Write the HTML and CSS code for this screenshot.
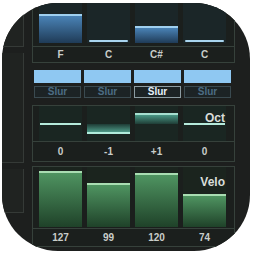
FILE: index.html
```html
<!DOCTYPE html>
<html lang="en">
<head>
    <meta charset="UTF-8">
    <meta name="viewport" content="width=device-width, initial-scale=1.0">
    <title>Sequencer</title>
    <link rel="stylesheet" href="styles.css">
</head>
<body>
    <div class="app">
        <div class="side">
            <div class="side-box"></div>
            <div class="side-box tall"></div>
            <div class="side-box"></div>
        </div>
        <div class="main">
            <!-- Note -->
            <div class="section note">
                <div class="cols">
                    <div class="col"><div class="bar blue" style="height:29px"></div></div>
                    <div class="col"><div class="bar line-blue"></div></div>
                    <div class="col"><div class="bar blue" style="height:17px"></div></div>
                    <div class="col"><div class="bar line-blue"></div></div>
                </div>
                <div class="labels">
                    <span>F</span><span>C</span><span>C#</span><span>C</span>
                </div>
            </div>

            <!-- Slur -->
            <div class="slur-row">
                <div class="slur"><div class="slur-fill"></div><div class="slur-btn">Slur</div></div>
                <div class="slur"><div class="slur-fill"></div><div class="slur-btn">Slur</div></div>
                <div class="slur"><div class="slur-fill"></div><div class="slur-btn on">Slur</div></div>
                <div class="slur"><div class="slur-fill"></div><div class="slur-btn">Slur</div></div>
            </div>

            <!-- Octave -->
            <div class="section oct">
                <div class="cols">
                    <div class="col"><div class="bar line-teal" style="margin-top:17px"></div></div>
                    <div class="col"><div class="bar teal-down" style="margin-top:18px;height:10px"></div></div>
                    <div class="col"><div class="bar teal-up" style="margin-top:7px;height:11px"></div></div>
                    <div class="col"><div class="bar line-teal" style="margin-top:17px"></div></div>
                    <span class="tag oct-tag">Oct</span>
                </div>
                <div class="labels">
                    <span>0</span><span>-1</span><span>+1</span><span>0</span>
                </div>
            </div>

            <!-- Velocity -->
            <div class="section velo">
                <div class="cols">
                    <div class="col"><div class="bar green" style="height:56px"></div></div>
                    <div class="col"><div class="bar green" style="height:44px"></div></div>
                    <div class="col"><div class="bar green" style="height:54px"></div></div>
                    <div class="col"><div class="bar green" style="height:33px"></div></div>
                    <span class="tag velo-tag">Velo</span>
                </div>
                <div class="labels">
                    <span>127</span><span>99</span><span>120</span><span>74</span>
                </div>
            </div>
        </div>
    </div>
</body>
</html>
```

FILE: styles.css
```css
* {
    box-sizing: border-box;
    margin: 0;
    padding: 0;
}

body {
    background: #ffffff;
    font-family: 'Liberation Sans', Arial, sans-serif;
}

.app {
    width: 248px;
    height: 248px;
    margin: 3px 0 0 2px;
    border-radius: 56px;
    overflow: hidden;
    background: #1d1f1e;
    display: flex;
}

/* Left strip (neighbour panel) */
.side {
    width: 30px;
    display: flex;
    flex-direction: column;
    gap: 6px;
    padding: 0 8px 0 0;
}

.side-box {
    height: 44px;
    border-right: 1px solid #353a37;
    border-bottom: 1px solid #353a37;
    background: #202321;
}

.side-box.tall {
    height: 110px;
}

.main {
    width: 203px;
    display: flex;
    flex-direction: column;
}

.section {
    border: 1px solid #36413b;
    background: #1b1f1d;
}

.cols {
    display: flex;
    gap: 5px;
    padding: 0 8px 0 6px;
    border-bottom: 1px solid #36413b;
    position: relative;
}

.col {
    width: 43px;
    display: flex;
    flex-direction: column;
    justify-content: flex-end;
}

.labels {
    display: flex;
    gap: 5px;
    padding: 0 8px 0 6px;
}

.labels span {
    width: 43px;
    text-align: center;
    color: #c9cdca;
    font-size: 10px;
    font-weight: bold;
}

/* Note section */
.note {
    border-top: none;
    height: 60px;
}

.note .cols {
    height: 44px;
    padding-bottom: 3px;
}

.note .col {
    background: #1b2628;
}

.note .labels {
    height: 14px;
    line-height: 15px;
}

.bar.blue {
    background: linear-gradient(#4a83b6, #1f3b57);
    border-top: 2px solid #9fd0f0;
}

.bar.line-blue {
    height: 2px;
    margin: 0 2px 1px;
    border-radius: 1px;
    background: #a9d5ef;
}

/* Slur row */
.slur-row {
    display: flex;
    gap: 3px;
    padding-left: 2px;
    margin-top: 7px;
}

.slur {
    width: 47px;
    display: flex;
    flex-direction: column;
    gap: 3px;
}

.slur-fill {
    height: 13px;
    background: #8fc8f2;
}

.slur-btn {
    height: 12px;
    border: 1px solid #3a4a50;
    background: #1c2325;
    color: #4c6d84;
    font-size: 10px;
    font-weight: bold;
    text-align: center;
    line-height: 10px;
}

.slur-btn.on {
    border-color: #8c9ca2;
    color: #e6f2fa;
}

/* Octave section */
.oct {
    margin-top: 7px;
}

.oct .cols {
    height: 36px;
}

.oct .col {
    justify-content: flex-start;
    background: #1a2622;
}

.oct .labels {
    height: 19px;
    line-height: 19px;
}

.bar.line-teal {
    height: 2px;
    margin-left: 1px;
    margin-right: 1px;
    background: #b5eadb;
}

.bar.teal-down {
    background: linear-gradient(#1e3b35, #4e9a88);
    border-bottom: 2px solid #b0ecdc;
}

.bar.teal-up {
    background: linear-gradient(#4a9886, #1f3d36);
    border-top: 2px solid #a6dfd0;
}

.tag {
    position: absolute;
    color: #d9ddd9;
    font-size: 12px;
    font-weight: bold;
}

.oct-tag {
    right: 9px;
    top: 5px;
}

/* Velocity section */
.velo {
    margin-top: 4px;
}

.velo .cols {
    height: 62px;
    padding-bottom: 1px;
}

.velo .col {
    background: #1b241e;
}

.velo .labels {
    height: 17px;
    line-height: 18px;
}

.bar.green {
    background: linear-gradient(#4f9461, #1f4229);
    border-top: 2px solid #a9ddb2;
}

.velo-tag {
    right: 9px;
    top: 8px;
}
```
